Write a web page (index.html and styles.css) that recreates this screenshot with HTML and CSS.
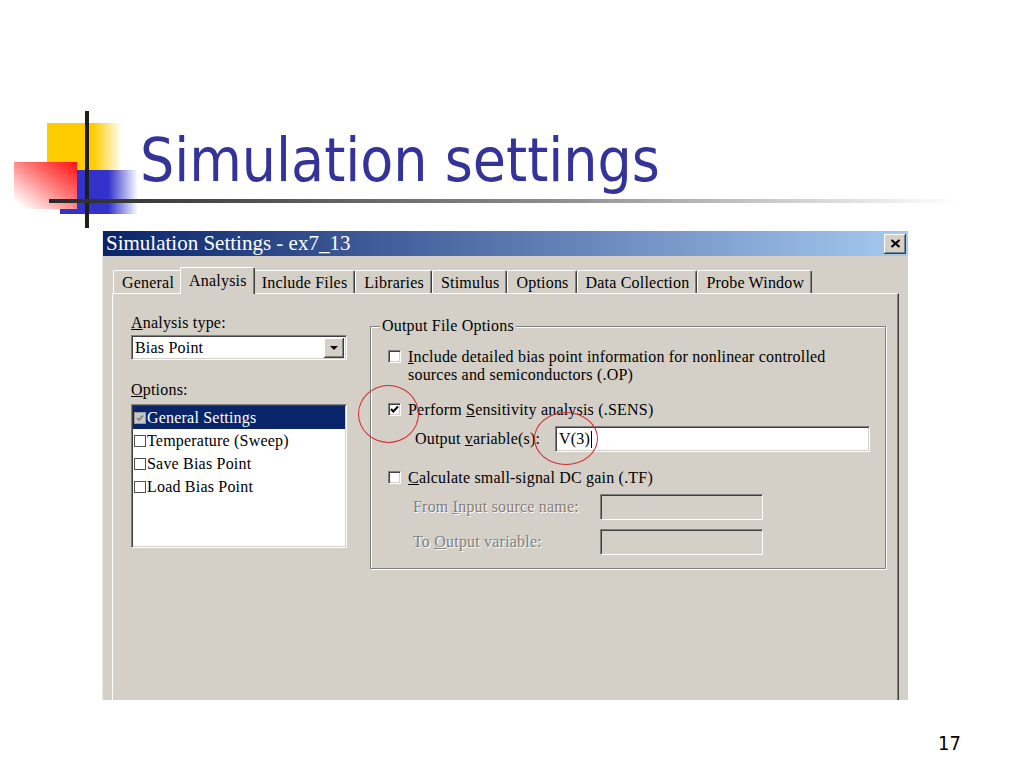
FILE: index.html
```html
<!DOCTYPE html>
<html lang="en">
<head>
    <meta charset="UTF-8">
    <title>Simulation settings</title>
    <link rel="stylesheet" href="styles.css">
</head>
<body>
    <div class="slide">
        <div class="head">
            <div class="logo">
                <span class="yellow"></span>
                <span class="blue"></span>
                <span class="red"></span>
                <span class="vline"></span>
            </div>
            <h1 class="title">Simulation settings</h1>
            <div class="rule"></div>
        </div>

        <div class="dialog">
            <div class="titlebar">
                <span class="caption">Simulation Settings - ex7_13</span>
                <span class="close-btn">
                    <svg width="11" height="9" viewBox="0 0 11 9"><path d="M1.5 1 L9.5 8 M9.5 1 L1.5 8" stroke="#000" stroke-width="2.2" fill="none"/></svg>
                </span>
            </div>

            <div class="tabs">
                <span class="tab">General</span>
                <span class="tab active">Analysis</span>
                <span class="tab">Include Files</span>
                <span class="tab">Libraries</span>
                <span class="tab">Stimulus</span>
                <span class="tab">Options</span>
                <span class="tab">Data Collection</span>
                <span class="tab">Probe Window</span>
            </div>

            <div class="panel">
                <div class="left-col">
                    <div class="field-label"><u>A</u>nalysis type:</div>
                    <div class="combo">
                        <span>Bias Point</span>
                        <span class="drop-btn"><span class="arrow"></span></span>
                    </div>
                    <div class="field-label options-label"><u>O</u>ptions:</div>
                    <div class="listbox">
                        <div class="item selected">
                            <span class="item-box grayed">
                                <svg width="10" height="10" viewBox="0 0 10 10"><path d="M2 5 L4 7 L8 2.5" stroke="#8a8a8a" stroke-width="2" fill="none"/></svg>
                            </span>General Settings
                        </div>
                        <div class="item"><span class="item-box"></span>Temperature (Sweep)</div>
                        <div class="item"><span class="item-box"></span>Save Bias Point</div>
                        <div class="item"><span class="item-box"></span>Load Bias Point</div>
                    </div>
                </div>

                <fieldset class="group">
                    <legend>Output File Options</legend>

                    <div class="opt-row first">
                        <span class="check"></span>
                        <span class="opt-text"><u>I</u>nclude detailed bias point information for nonlinear controlled<br>sources and semiconductors (.OP)</span>
                    </div>

                    <div class="opt-row sens">
                        <span class="check">
                            <svg width="9" height="9" viewBox="0 0 9 9"><path d="M1 4 L3.3 6.5 L8 1.5" stroke="#000" stroke-width="2" fill="none"/></svg>
                        </span>
                        <span class="opt-text">Perform <u>S</u>ensitivity analysis (.SENS)</span>
                    </div>

                    <div class="field-row out-var">
                        <span class="row-label">Output <u>v</u>ariable(s):</span>
                        <span class="textbox wide">V(3)<span class="caret"></span></span>
                    </div>

                    <div class="opt-row tf">
                        <span class="check"></span>
                        <span class="opt-text"><u>C</u>alculate small-signal DC gain (.TF)</span>
                    </div>

                    <div class="field-row sub from-row">
                        <span class="row-label disabled">From <u>I</u>nput source name:</span>
                        <span class="textbox narrow off"></span>
                    </div>

                    <div class="field-row sub to-row">
                        <span class="row-label disabled">To <u>O</u>utput variable:</span>
                        <span class="textbox narrow off"></span>
                    </div>
                </fieldset>
            </div>
        </div>

        <div class="page-num">17</div>

        <span class="mark mark-1"></span>
        <span class="mark mark-2"></span>
    </div>
</body>
</html>
```

FILE: styles.css
```css
* {
    margin: 0;
    padding: 0;
    box-sizing: border-box;
}

body {
    background: #fff;
}

.slide {
    position: relative;
    width: 1024px;
    height: 768px;
    overflow: hidden;
    background: #fff;
    font-family: "DejaVu Sans Condensed", "DejaVu Sans", sans-serif;
}

/* Slide header */
.head {
    height: 231px;
    padding-top: 125px;
}

.logo span {
    position: absolute;
    display: block;
}

.logo .yellow {
    left: 47px;
    top: 123px;
    width: 75px;
    height: 50px;
    background: linear-gradient(90deg, #ffcc00 0%, #ffcc00 62%, rgba(255,204,0,0) 100%);
}

.logo .blue {
    left: 60px;
    top: 170px;
    width: 78px;
    height: 44px;
    background: linear-gradient(90deg, #3333cc 0%, #3333cc 62%, rgba(51,51,204,0) 100%);
}

.logo .red {
    left: 14px;
    top: 162px;
    width: 63px;
    height: 47px;
    background: linear-gradient(to bottom left, #ff1010 0%, #ff7070 40%, #fff 92%);
}

.logo .vline {
    left: 85px;
    top: 111px;
    width: 4px;
    height: 117px;
    background: #1e1e1e;
}

.title {
    padding-left: 140px;
    font-size: 60px;
    line-height: 70px;
    font-weight: normal;
    color: #333399;
    white-space: nowrap;
}

.rule {
    position: relative;
    width: 911px;
    height: 4px;
    margin: 4px 0 0 49px;
    background: linear-gradient(90deg, #2a2a2a 0%, #8c8c8c 55%, rgba(255,255,255,0) 100%);
}

/* Dialog window */
.dialog {
    display: flex;
    flex-direction: column;
    width: 806px;
    height: 469px;
    margin-left: 102px;
    overflow: hidden;
    background: #d4d0c8;
    border-left: 1px solid #ece9e2;
    font-family: "Liberation Serif", serif;
    font-size: 16px;
    line-height: 18px;
    letter-spacing: 0.2px;
    color: #000;
}

.titlebar {
    display: flex;
    align-items: center;
    justify-content: space-between;
    flex-shrink: 0;
    height: 25px;
    padding: 0 2px 0 3px;
    background: linear-gradient(90deg, #0a246a, #a6caf0);
}

.caption {
    color: #fff;
    font-size: 21px;
    line-height: 25px;
    letter-spacing: 0;
    white-space: nowrap;
}

.close-btn {
    display: flex;
    align-items: center;
    justify-content: center;
    width: 22px;
    height: 20px;
    background: #d4d0c8;
    box-shadow: inset -1px -1px 0 #404040, inset 1px 1px 0 #fff, inset -2px -2px 0 #808080;
}

/* Tabs */
.tabs {
    display: flex;
    align-items: flex-end;
    flex-shrink: 0;
    height: 26px;
    margin-top: 11px;
    padding-left: 10px;
}

.tab {
    height: 23px;
    padding: 3px 7px 0 8px;
    border-top: 1px solid #fff;
    border-left: 1px solid #fff;
    border-right: 1px solid #404040;
    border-radius: 2px 2px 0 0;
    box-shadow: inset -1px 0 0 #808080;
    white-space: nowrap;
}

.tab.active {
    position: relative;
    z-index: 1;
    height: 27px;
    margin: 0 -2px -1px;
    padding-top: 4px;
    background: #d4d0c8;
}

.panel {
    display: flex;
    align-items: flex-start;
    gap: 23px;
    flex-shrink: 0;
    width: 787px;
    height: 420px;
    margin-left: 9px;
    padding: 20px 0 0 18px;
    border-top: 1px solid #fff;
    border-left: 1px solid #fff;
    border-right: 1px solid #404040;
    box-shadow: inset -1px 0 0 #808080;
}

/* Left column */
.left-col {
    width: 216px;
    flex-shrink: 0;
}

.field-label {
    height: 18px;
    white-space: nowrap;
}

.options-label {
    margin-top: 21px;
}

.combo {
    display: flex;
    align-items: center;
    justify-content: space-between;
    height: 25px;
    margin-top: 3px;
    padding: 0 2px 0 3px;
    background: #fff;
    border: 1px solid;
    border-color: #808080 #fff #fff #808080;
    box-shadow: inset 1px 1px 0 #404040, inset -1px -1px 0 #d4d0c8;
}

.drop-btn {
    display: flex;
    align-items: center;
    justify-content: center;
    width: 20px;
    height: 20px;
    background: #d4d0c8;
    box-shadow: inset -1px -1px 0 #404040, inset 1px 1px 0 #fff, inset -2px -2px 0 #808080;
}

.arrow {
    width: 0;
    height: 0;
    border-left: 4px solid transparent;
    border-right: 4px solid transparent;
    border-top: 4px solid #000;
}

.listbox {
    height: 144px;
    margin-top: 5px;
    padding: 1px 1px;
    background: #fff;
    border: 1px solid;
    border-color: #808080 #fff #fff #808080;
    box-shadow: inset 1px 1px 0 #404040, inset -1px -1px 0 #d4d0c8;
}

.item {
    display: flex;
    align-items: center;
    height: 23px;
    padding-left: 1px;
    white-space: nowrap;
}

.item.selected {
    background: #0a246a;
    color: #fff;
}

.item-box {
    display: flex;
    align-items: center;
    justify-content: center;
    width: 12px;
    height: 12px;
    margin-right: 1px;
    border: 1px solid #505050;
    background: #fff;
}

.item-box.grayed {
    background: #c8c8c8;
    border-color: #9a9a9a;
}

/* Output file options group */
.group {
    width: 516px;
    margin-top: 3px;
    padding: 13px 0 13px 17px;
    border: 1px solid #808080;
    box-shadow: 1px 1px 0 #fff, inset 1px 1px 0 #fff;
    min-width: 0;
}

.group legend {
    margin-left: -8px;
    padding: 0 2px;
    background: #d4d0c8;
    line-height: 18px;
}

.opt-row {
    display: flex;
    align-items: flex-start;
    gap: 7px;
    white-space: nowrap;
}

.opt-row.sens {
    margin-top: 17px;
}

.opt-row.tf {
    margin-top: 17px;
}

.check {
    display: flex;
    align-items: center;
    justify-content: center;
    flex-shrink: 0;
    width: 13px;
    height: 13px;
    margin-top: 2px;
    background: #fff;
    border: 1px solid;
    border-color: #808080 #fff #fff #808080;
    box-shadow: inset 1px 1px 0 #404040, inset -1px -1px 0 #d4d0c8;
}

.field-row {
    display: flex;
    align-items: center;
}

.field-row.out-var {
    margin-top: 7px;
}

.field-row.from-row {
    margin-top: 7px;
}

.field-row.to-row {
    margin-top: 9px;
}

.row-label {
    flex-shrink: 0;
    white-space: nowrap;
}

.out-var .row-label {
    width: 167px;
    padding-left: 27px;
}

.sub .row-label {
    width: 212px;
    padding-left: 25px;
}

.row-label.disabled {
    color: #808080;
    text-shadow: 1px 1px 0 #fff;
}

.textbox {
    display: flex;
    align-items: center;
    height: 26px;
    padding-left: 3px;
    background: #fff;
    border: 1px solid;
    border-color: #808080 #fff #fff #808080;
    box-shadow: inset 1px 1px 0 #404040, inset -1px -1px 0 #d4d0c8;
}

.textbox.wide {
    width: 315px;
}

.textbox.narrow {
    width: 163px;
}

.textbox.off {
    background: #d4d0c8;
}

.caret {
    width: 1px;
    height: 17px;
    margin-left: 1px;
    background: #000;
}

/* Footer */
.page-num {
    margin-top: 31px;
    padding-right: 63px;
    text-align: right;
    font-size: 20px;
    line-height: 24px;
    color: #000;
}

/* Red annotation circles */
.mark {
    position: absolute;
    border: 1.5px solid #d42a2a;
    border-radius: 50%;
}

.mark-1 {
    left: 358px;
    top: 385px;
    width: 61px;
    height: 58px;
}

.mark-2 {
    left: 534px;
    top: 412px;
    width: 64px;
    height: 53px;
}
```
